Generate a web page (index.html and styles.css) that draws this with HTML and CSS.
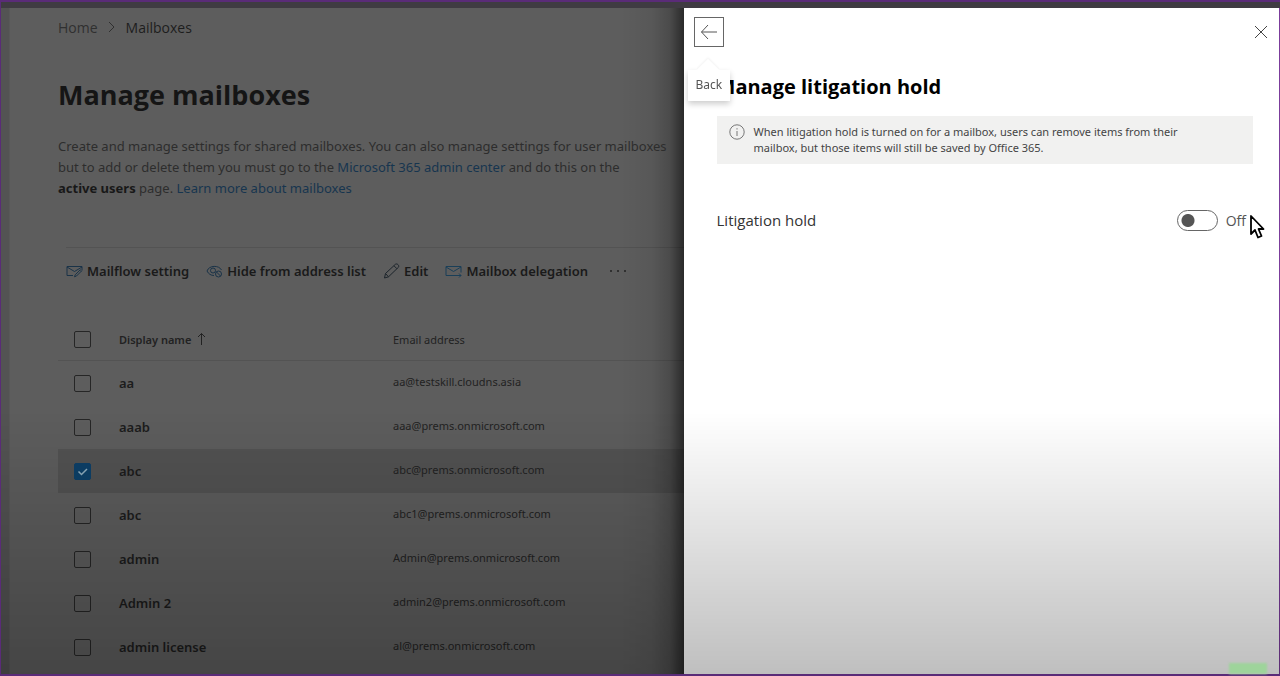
FILE: index.html
```html
<!DOCTYPE html>
<html lang="en">
<head>
<meta charset="utf-8">
<title>Manage mailboxes</title>
<link rel="stylesheet" href="styles.css">
</head>
<body>
<div class="app">
  <main class="page">
    <nav class="crumbs" aria-label="Breadcrumb">
      <a href="#">Home</a>
      <svg width="8" height="14" viewBox="0 0 8 14"><path d="M1 2l5 5-5 5" fill="none" stroke="#303030"/></svg>
      <span class="current">Mailboxes</span>
    </nav>
    <h1 class="title">Manage mailboxes</h1>
    <p class="intro">Create and manage settings for shared mailboxes. You can also manage settings for user mailboxes<br>but to add or delete them you must go to the <a href="#">Microsoft 365 admin center</a> and do this on the<br><b>active users</b> page. <a href="#">Learn more about mailboxes</a></p>
    <div class="toolbar">
      <button class="tool" type="button">
        <svg width="17" height="16" viewBox="0 0 17 16" fill="none" stroke="#1a3348"><path d="M7 12.5H1v-9h15v4M1 4l7.500 4.500L16 4"/><path d="M15.500 8l-5 5-2 .8.700-2 5-5z"/></svg>
        Mailflow setting</button>
      <button class="tool" type="button">
        <svg width="17" height="16" viewBox="0 0 17 16" fill="none" stroke="#1a3348"><path d="M1 8c2-6 12-6 14.500-1M1 8c1.500 3 4 4.500 7 4.500"/><circle cx="7" cy="7.500" r="2.500"/><circle cx="12.500" cy="11" r="3"/><path d="M10.500 9l4 4"/></svg>
        Hide from address list</button>
      <button class="tool" type="button">
        <svg width="17" height="16" viewBox="0 0 17 16" fill="none" stroke="#1c242b"><path d="M1.500 15l1-4.500L12.500 1.200c1.500-1 4 1 3 3L5.500 13.800zM11 2.800l3 3M2.500 10.500l3 3.300"/></svg>
        Edit</button>
      <button class="tool" type="button">
        <svg width="17" height="16" viewBox="0 0 17 16" fill="none" stroke="#1a3f58"><path d="M11 12.500H1v-9h15v6M1 4l7.500 4.500L16 4M10.500 12.500H16M14 10.500l2 2-2 2"/></svg>
        Mailbox delegation</button>
      <button class="tool more" type="button" aria-label="More">
        <svg width="18" height="4" viewBox="0 0 18 4" fill="#222"><circle cx="2" cy="2" r="1"/><circle cx="9" cy="2" r="1"/><circle cx="16" cy="2" r="1"/></svg>
      </button>
    </div>
    <table class="list">
      <thead>
        <tr>
          <th class="pick"><input type="checkbox" aria-label="Select all"></th>
          <th class="name">Display name <svg width="9" height="14" viewBox="0 0 9 14" fill="none" stroke="#222"><path d="M4.500 13V1.500M1 5l3.500-3.500L8 5"/></svg></th>
          <th>Email address</th>
        </tr>
      </thead>
      <tbody>
        <tr><td><input type="checkbox" aria-label="aa"></td><td class="who">aa</td><td class="mail">aa@testskill.cloudns.asia</td></tr>
        <tr><td><input type="checkbox" aria-label="aaab"></td><td class="who">aaab</td><td class="mail">aaa@prems.onmicrosoft.com</td></tr>
        <tr class="selected"><td><input type="checkbox" aria-label="abc" checked></td><td class="who">abc</td><td class="mail">abc@prems.onmicrosoft.com</td></tr>
        <tr><td><input type="checkbox" aria-label="abc"></td><td class="who">abc</td><td class="mail">abc1@prems.onmicrosoft.com</td></tr>
        <tr><td><input type="checkbox" aria-label="admin"></td><td class="who">admin</td><td class="mail">Admin@prems.onmicrosoft.com</td></tr>
        <tr><td><input type="checkbox" aria-label="Admin 2"></td><td class="who">Admin 2</td><td class="mail">admin2@prems.onmicrosoft.com</td></tr>
        <tr><td><input type="checkbox" aria-label="admin license"></td><td class="who">admin license</td><td class="mail">al@prems.onmicrosoft.com</td></tr>
      </tbody>
    </table>
  </main>
  <aside class="panel">
    <div class="bar">
      <div class="back-wrap">
        <button class="back" type="button" aria-label="Back">
          <svg width="18" height="16" viewBox="0 0 18 16" fill="none" stroke="#555"><path d="M17 8H1.500M8 1L1.500 8 8 15"/></svg>
        </button>
        <div class="tip" role="tooltip">Back</div>
      </div>
      <button class="close" type="button" aria-label="Close">
        <svg width="14" height="14" viewBox="0 0 14 14" fill="none" stroke="#444"><path d="M1 1l12 12M13 1L1 13"/></svg>
      </button>
    </div>
    <div class="body">
      <h2 class="heading">Manage litigation hold</h2>
      <div class="notice">
        <svg width="16" height="16" viewBox="0 0 16 16" fill="none" stroke="#777"><circle cx="8" cy="8" r="7.200"/><path d="M8 7v5M8 4.200v1.300"/></svg>
        <p>When litigation hold is turned on for a mailbox, users can remove items from their<br>mailbox, but those items will still be saved by Office 365.</p>
      </div>
      <div class="setting">
        <label for="hold">Litigation hold</label>
        <span class="switch">
          <input type="checkbox" role="switch" id="hold">
          <span>Off</span>
          <svg class="cursor" width="16" height="26" viewBox="0 0 16 26"><path d="M2 2v18l4-4 3 7.500 3.500-1.500-3-7h5z" fill="#fff" stroke="#000" stroke-width="1.800" stroke-linejoin="round"/></svg>
        </span>
      </div>
    </div>
  </aside>
</div>
<div class="shade"></div>
<div class="badge"></div>
</body>
</html>
```
FILE: styles.css
```css
* { box-sizing: border-box; }
body {
  margin: 0;
  font-family: "Noto Sans", "Open Sans", sans-serif;
  font-size: 13px;
  color: #222;
  background: #3f3b42;
}
a { color: #17354f; text-decoration: none; }
button { font: inherit; color: inherit; background: none; border: 0; padding: 0; }
.app { display: flex; height: 100vh; padding-top: 8px; overflow: hidden; }
.page {
  flex: 1;
  min-width: 0;
  padding: 8px 0 0 58px;
  overflow: hidden;
  white-space: nowrap;
  background:
    linear-gradient(to left, rgba(0,0,0,.55), rgba(0,0,0,.2) 14px, rgba(0,0,0,.06) 32px, transparent 64px),
    linear-gradient(to right, #535353 9px, #5d5d5d 10px);
}
.crumbs { display: flex; align-items: center; gap: 10px; height: 22px; font-family: "Open Sans", sans-serif; font-size: 14px; }
.crumbs a { color: #303030; }
.crumbs .current { color: #1d1d1d; }
.title { margin: 38px 0 0; font-family: "Open Sans", sans-serif; font-size: 27px; line-height: 38px; font-weight: 700; color: #151515; }
.intro { margin: 22px 0 0; line-height: 21px; color: #2d2d2d; }
.intro b { color: #181818; }
.toolbar {
  display: flex;
  align-items: center;
  gap: 17px;
  margin: 48px 0 0 8px;
  height: 46px;
  border-top: 1px solid rgba(0,0,0,.1);
}
.tool { display: flex; align-items: center; gap: 4px; font-weight: 600; color: #1a1a1a; }
.more { padding-left: 4px; }
.list { width: 100%; margin-top: 25px; border-collapse: separate; border-spacing: 0; table-layout: fixed; font-size: 11px; text-align: left; }
.list thead tr { height: 43px; }
.list tbody tr { height: 44px; }
.list th, .list td { padding: 0; }
.list th { border-bottom: 1px solid rgba(0,0,0,.1); font-weight: 400; }
.list .pick { width: 61px; }
.list .name { width: 274px; font-weight: 600; }
.name svg { vertical-align: -2px; margin-left: 3px; }
.list .who { font-size: 13px; font-weight: 600; color: #1c1c1c; }
.list .mail { padding-bottom: 3px; }
.selected { background: rgba(0,0,0,.11); }
.list input {
  display: block;
  appearance: none;
  width: 17px;
  height: 17px;
  margin: 0 0 0 16px;
  border: 1px solid #262626;
  border-radius: 2px;
}
.list input:checked {
  border-color: #0d4068;
  background: #0d4068 url("data:image/svg+xml,%3Csvg xmlns='http://www.w3.org/2000/svg' viewBox='0 0 15 15'%3E%3Cpath d='M3.500 7.500l3 3 5.500-5.500' fill='none' stroke='%238eabbb' stroke-width='1.500'/%3E%3C/svg%3E") center / 15px no-repeat;
}
.panel { width: 46.6%; background: #fff; border-right: 1px solid #7b3c9b; color: #333; }
.bar { display: flex; justify-content: space-between; align-items: center; padding: 9px 11px 0 10px; }
.back-wrap { position: relative; }
.back { display: grid; place-items: center; width: 30px; height: 30px; border: 1px solid #666; }
.close { display: flex; }
.tip {
  position: absolute;
  z-index: 1;
  top: 53px;
  left: -6px;
  padding: 6px 8px 8px;
  line-height: 17px;
  font-size: 12px;
  color: #555;
  background: #fff;
  box-shadow: 0 3px 6px rgba(0,0,0,.2);
}
.tip::before {
  content: "";
  position: absolute;
  top: -8px;
  left: 12px;
  width: 16px;
  height: 16px;
  background: #fff;
  box-shadow: -1px -1px 2px rgba(0,0,0,.05);
  transform: rotate(45deg);
  z-index: -1;
}
.body { padding: 0 26px 0 33px; }
.heading { margin: 26px 0 0; font-family: "Open Sans", sans-serif; font-size: 20px; line-height: 28px; font-weight: 700; color: #000; }
.notice {
  display: flex;
  gap: 9px;
  margin-top: 15px;
  padding: 8px 12px;
  background: #f1f1f0;
  font-size: 11px;
  line-height: 16px;
  color: #444;
}
.notice p { margin: 0; }
.setting { display: flex; justify-content: space-between; align-items: center; margin-top: 45px; height: 22px; font-family: "Open Sans", sans-serif; }
.setting label { font-size: 15px; }
.switch { position: relative; display: flex; align-items: center; gap: 8px; padding-right: 7px; font-size: 14px; color: #555; }
.switch input {
  appearance: none;
  width: 41px;
  height: 21px;
  margin: 0;
  border: 1px solid #666;
  border-radius: 11px;
  background: radial-gradient(circle at 10px 50%, #555 6px, transparent 7px);
}
.cursor { position: absolute; top: 4px; right: -12px; }
.shade {
  position: fixed;
  inset: 0;
  border: solid #5a2b78;
  border-width: 2px 0 2px 1px;
  background: linear-gradient(transparent 61%, rgba(0,0,0,.25));
  pointer-events: none;
}
.badge { position: fixed; right: 13px; bottom: 2px; width: 38px; height: 11px; background: #9ed49b; filter: blur(1px); }
```
